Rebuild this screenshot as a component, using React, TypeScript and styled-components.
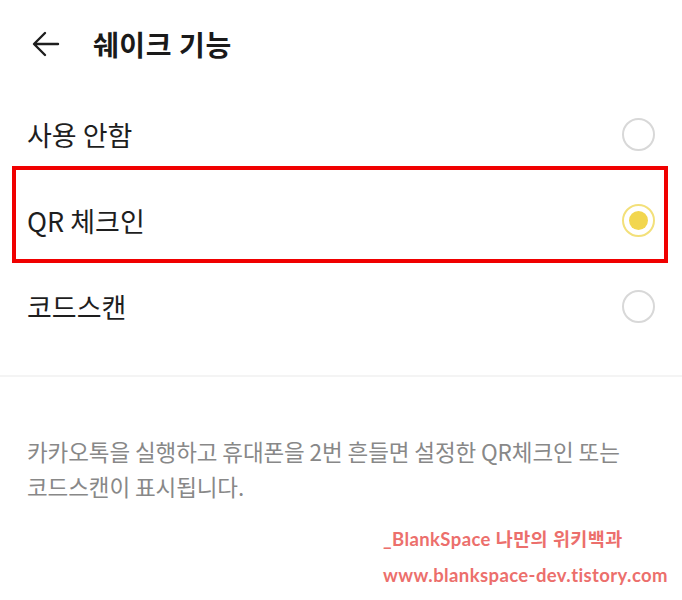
import styled, { createGlobalStyle } from "styled-components";

const GlobalStyle = createGlobalStyle`
  html, body {
    margin: 0;
    padding: 0;
    background: #ffffff;
  }
  body {
    font-family: "Noto Sans CJK KR", "Noto Sans", sans-serif;
    color: #1e1e1e;
  }
`;

const options = [
  { id: "off", label: "사용 안함" },
  { id: "qr", label: "QR 체크인" },
  { id: "scan", label: "코드스캔" },
];

const selected = "qr";

const App = () => {
  return (
    <Page>
      <GlobalStyle />
      <Header>
        <BackButton aria-label="back">
          <svg width="30" height="30" viewBox="0 0 30 30" fill="none">
            <path
              d="M27 15H4M14 4L3 15l11 11"
              stroke="#1e1e1e"
              strokeWidth="2.4"
              strokeLinecap="round"
              strokeLinejoin="round"
            />
          </svg>
        </BackButton>
        <Title>쉐이크 기능</Title>
      </Header>

      <OptionList>
        {options.map((opt) => (
          <OptionRow key={opt.id} $marked={opt.id === "qr"}>
            <OptionLabel>{opt.label}</OptionLabel>
            <Radio $checked={opt.id === selected} />
          </OptionRow>
        ))}
      </OptionList>

      <Divider />

      <Description>
        카카오톡을 실행하고 휴대폰을 2번 흔들면 설정한 QR체크인 또는
        <br />
        코드스캔이 표시됩니다.
      </Description>

      <Watermark>
        <p>_BlankSpace 나만의 위키백과</p>
        <p>www.blankspace-dev.tistory.com</p>
      </Watermark>
    </Page>
  );
};

export default App;

/* ================= STYLES ================= */

const Page = styled.div`
  width: 682px;
  height: 600px;
  overflow: hidden;
  background: #fff;
`;

const Header = styled.header`
  height: 88px;
  display: flex;
  align-items: center;
  padding-left: 31px;
  gap: 29px;
`;

const BackButton = styled.div`
  width: 33px;
  height: 30px;
  display: flex;
  align-items: center;
`;

const Title = styled.h1`
  margin: 0;
  font-size: 28px;
  font-weight: 700;
  letter-spacing: 0.6px;
  color: #1a1a1a;
`;

const OptionList = styled.div`
  display: flex;
  flex-direction: column;
  padding-top: 3px;
`;

const OptionRow = styled.div<{ $marked?: boolean }>`
  position: relative;
  height: 86px;
  display: flex;
  align-items: center;
  justify-content: space-between;
  padding: 0 27px 0 27px;

  ${({ $marked }) =>
    $marked &&
    `
    &::after {
      content: "";
      position: absolute;
      left: 12px;
      right: 14px;
      top: -11px;
      bottom: 0px;
      border: 4px solid #f00000;
      pointer-events: none;
    }
  `}
`;

const OptionLabel = styled.span`
  font-size: 27px;
  font-weight: 400;
  color: #1e1e1e;
`;

const Radio = styled.span<{ $checked?: boolean }>`
  width: 33px;
  height: 33px;
  box-sizing: border-box;
  border-radius: 50%;
  border: 2px solid ${({ $checked }) => ($checked ? "#f3e07a" : "#d8d8d8")};
  display: flex;
  align-items: center;
  justify-content: center;

  &::before {
    content: "";
    width: 19px;
    height: 19px;
    border-radius: 50%;
    background: #f2d64e;
    display: ${({ $checked }) => ($checked ? "block" : "none")};
  }
`;

const Divider = styled.div`
  margin-top: 26px;
  height: 2px;
  background: #f4f4f4;
`;

const Description = styled.p`
  margin: 0;
  padding: 57px 27px 0;
  font-size: 22.5px;
  line-height: 35px;
  letter-spacing: -0.1px;
  color: #888888;
`;

const Watermark = styled.div`
  margin-top: 22px;
  padding-left: 383px;
  display: flex;
  flex-direction: column;
  gap: 10px;

  p {
    margin: 0;
    font-family: "Lato", "Noto Sans CJK KR", sans-serif;
    font-weight: 700;
    font-size: 18.5px;
    line-height: 26px;
    letter-spacing: 0.4px;
    color: #ec6f6c;
  }
`;
